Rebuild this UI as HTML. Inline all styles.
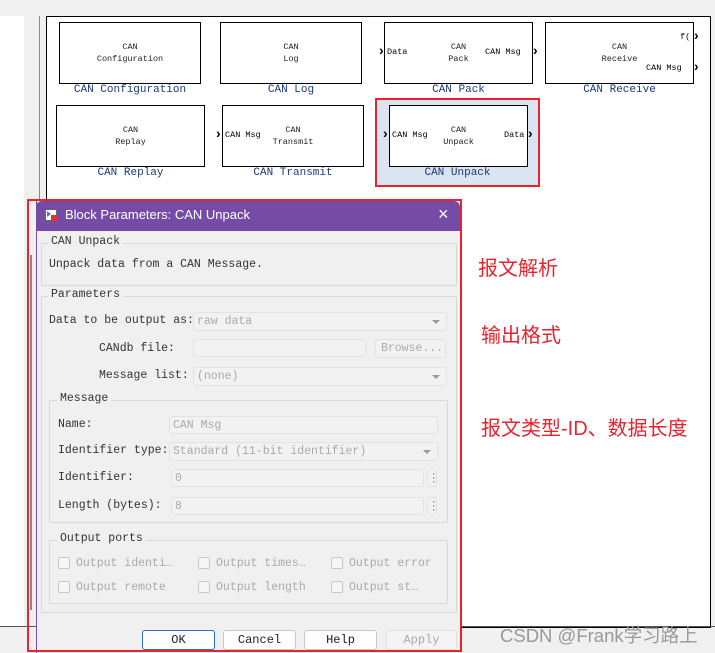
<!DOCTYPE html>
<html><head><meta charset="utf-8"><style>
*{margin:0;padding:0;box-sizing:border-box}
body{width:715px;height:653px;overflow:hidden;background:#f0f0f0;position:relative;font-family:"Liberation Mono","Noto Sans CJK SC",monospace}
.a{position:absolute}
.blk{position:absolute;border:1.5px solid #000;background:#fff;font-size:8.5px;color:#222;text-align:center;line-height:12px}
.lbl{position:absolute;font-size:11px;color:#1a3a7a;text-align:center;white-space:nowrap}
.pt{position:absolute;font-size:8.5px}
.t{position:absolute;font-size:11.5px;color:#333;white-space:nowrap}
.g{color:#aaa}
.fs{position:absolute;border:1px solid #d8d8d8;border-radius:2px}
.lg{position:absolute;background:#f0f0f0;padding:0 3px;font-size:11.5px;color:#333}
.in{position:absolute;border:1px solid #e2e2e2;background:#f2f2f2;border-radius:3px;font-size:11.5px;color:#aaa;padding-left:3px;line-height:17px;white-space:nowrap}
.dd:after{content:"";position:absolute;right:6px;top:7px;border:4px solid transparent;border-top:4px solid #999}
.cb{position:absolute;width:12px;height:12px;border:1px solid #c8c8c8;border-radius:2px;background:#f6f6f6}
.btn{position:absolute;top:630px;height:20px;border:1px solid #c8c8c8;border-radius:3px;background:#fdfdfd;font-size:12px;text-align:center;line-height:19px;color:#222}
.ar{position:absolute;font-size:14px;font-weight:bold;color:#000;font-family:"Liberation Sans",sans-serif}
.red{position:absolute;color:#e8232f;font-family:"Liberation Sans","Noto Sans CJK SC",sans-serif;font-size:20px;white-space:nowrap}
</style></head><body>
<div class="a" style="left:0;top:16px;width:24px;height:611px;background:#fff"></div>
<div class="a" style="left:39px;top:16px;width:1px;height:611px;background:#888"></div>
<div class="a" style="left:46px;top:16px;width:665px;height:612px;background:#fff;border:1px solid #000"></div>
<div class="a" style="left:0;top:626px;width:715px;height:1px;background:#555"></div>

<div class="blk" style="left:59px;top:22px;width:142px;height:62px;padding-top:18px">CAN<br>Configuration</div>
<div class="lbl" style="left:59px;top:84px;width:142px">CAN Configuration</div>
<div class="blk" style="left:220px;top:22px;width:142px;height:62px;padding-top:18px">CAN<br>Log</div>
<div class="lbl" style="left:220px;top:84px;width:142px">CAN Log</div>
<div class="blk" style="left:384px;top:22px;width:149px;height:62px;padding-top:18px">CAN<br>Pack</div>
<div class="pt" style="left:387px;top:47px">Data</div>
<div class="pt" style="left:485px;top:47px">CAN Msg</div>
<div class="ar" style="left:379px;top:42px">›</div><div class="ar" style="left:533px;top:42px">›</div>
<div class="lbl" style="left:384px;top:84px;width:149px">CAN Pack</div>
<div class="blk" style="left:545px;top:22px;width:149px;height:62px;padding-top:18px">CAN<br>Receive</div>
<div class="pt" style="left:680px;top:32px">f(</div>
<div class="pt" style="left:646px;top:63px">CAN Msg</div>
<div class="ar" style="left:694px;top:27px">›</div><div class="ar" style="left:694px;top:58px">›</div>
<div class="lbl" style="left:545px;top:84px;width:149px">CAN Receive</div>

<div class="blk" style="left:56px;top:105px;width:149px;height:62px;padding-top:18px">CAN<br>Replay</div>
<div class="lbl" style="left:56px;top:167px;width:149px">CAN Replay</div>
<div class="blk" style="left:222px;top:105px;width:142px;height:62px;padding-top:18px">CAN<br>Transmit</div>
<div class="pt" style="left:225px;top:130px">CAN Msg</div>
<div class="ar" style="left:216px;top:125px">›</div>
<div class="lbl" style="left:222px;top:167px;width:142px">CAN Transmit</div>

<div class="a" style="left:375px;top:98px;width:165px;height:89px;background:#dae5f1;border:2px solid #e8232f"></div>
<div class="blk" style="left:389px;top:105px;width:139px;height:62px;padding-top:18px">CAN<br>Unpack</div>
<div class="pt" style="left:392px;top:130px">CAN Msg</div>
<div class="pt" style="left:504px;top:130px">Data</div>
<div class="ar" style="left:383px;top:125px">›</div><div class="ar" style="left:528px;top:125px">›</div>
<div class="lbl" style="left:375px;top:167px;width:165px">CAN Unpack</div>

<div class="a" style="left:36px;top:201px;width:424px;height:452px;background:#f0f0f0;border-left:1px solid #7b4ea8"></div>
<div class="a" style="left:30px;top:255px;width:2px;height:355px;background:#888"></div>
<div class="a" style="left:36px;top:201px;width:424px;height:30px;background:#744ca6;border-radius:6px 6px 0 0"></div>
<div class="a" style="left:45px;top:209px;width:12px;height:12px;background:#fff;border:1px solid #666"><div class="a" style="left:5px;top:5px;width:6px;height:6px;background:#d33"></div><div class="a" style="left:1px;top:1px;border:3px solid transparent;border-left:4px solid #38a"></div></div>
<div class="a" style="left:65px;top:207px;font-family:'Liberation Sans',sans-serif;font-size:13px;color:#fff">Block Parameters: CAN Unpack</div>
<div class="a" style="left:438px;top:204px;font-family:'Liberation Sans',sans-serif;font-size:18px;color:#fff">×</div>

<div class="fs" style="left:41px;top:243px;width:416px;height:43px"></div>
<div class="lg" style="left:48px;top:235px">CAN Unpack</div>
<div class="t" style="left:49px;top:258px">Unpack data from a CAN Message.</div>

<div class="fs" style="left:41px;top:296px;width:416px;height:317px"></div>
<div class="lg" style="left:48px;top:288px">Parameters</div>
<div class="t" style="left:49px;top:314px">Data to be output as:</div>
<div class="in dd" style="left:193px;top:312px;width:254px;height:19px">raw data</div>
<div class="t" style="left:99px;top:342px">CANdb file:</div>
<div class="in" style="left:193px;top:339px;width:173px;height:18px"></div>
<div class="in" style="left:375px;top:339px;width:71px;height:19px;text-align:center">Browse...</div>
<div class="t" style="left:99px;top:369px">Message list:</div>
<div class="in dd" style="left:193px;top:367px;width:254px;height:19px">(none)</div>

<div class="fs" style="left:49px;top:400px;width:399px;height:123px"></div>
<div class="lg" style="left:57px;top:392px">Message</div>
<div class="t" style="left:58px;top:418px">Name:</div>
<div class="in" style="left:169px;top:416px;width:269px;height:18px">CAN Msg</div>
<div class="t" style="left:58px;top:444px">Identifier type:</div>
<div class="in dd" style="left:169px;top:442px;width:269px;height:19px">Standard (11-bit identifier)</div>
<div class="t" style="left:58px;top:471px">Identifier:</div>
<div class="in" style="left:171px;top:469px;width:253px;height:18px">0</div>
<div class="in" style="left:427px;top:469px;width:10px;height:18px;color:#888;padding:0;text-align:center">⋮</div>
<div class="t" style="left:58px;top:499px">Length (bytes):</div>
<div class="in" style="left:171px;top:497px;width:253px;height:18px">8</div>
<div class="in" style="left:427px;top:497px;width:10px;height:18px;color:#888;padding:0;text-align:center">⋮</div>

<div class="fs" style="left:49px;top:540px;width:399px;height:64px"></div>
<div class="lg" style="left:57px;top:532px">Output ports</div>
<div class="cb" style="left:58px;top:557px"></div><div class="t g" style="left:76px;top:557px">Output identi…</div>
<div class="cb" style="left:198px;top:557px"></div><div class="t g" style="left:216px;top:557px">Output times…</div>
<div class="cb" style="left:331px;top:557px"></div><div class="t g" style="left:349px;top:557px">Output error</div>
<div class="cb" style="left:58px;top:581px"></div><div class="t g" style="left:76px;top:581px">Output remote</div>
<div class="cb" style="left:198px;top:581px"></div><div class="t g" style="left:216px;top:581px">Output length</div>
<div class="cb" style="left:331px;top:581px"></div><div class="t g" style="left:349px;top:581px">Output st…</div>

<div class="btn" style="left:142px;width:73px;border-color:#2a6fc9">OK</div>
<div class="btn" style="left:223px;width:73px">Cancel</div>
<div class="btn" style="left:304px;width:73px">Help</div>
<div class="btn" style="left:386px;width:71px;color:#aaa;background:#f4f4f4;border-color:#e0e0e0">Apply</div>

<div class="a" style="left:27px;top:199px;width:435px;height:453px;border:2px solid #e8232f"></div>

<div class="red" style="left:478px;top:252px">报文解析</div>
<div class="red" style="left:481px;top:319px">输出格式</div>
<div class="red" style="left:481px;top:412px">报文类型-ID、数据长度</div>
<div class="a" style="left:500px;top:622px;font-family:'Liberation Sans','Noto Sans CJK SC',sans-serif;font-size:18.5px;color:#999;white-space:nowrap">CSDN @Frank学习路上</div>
</body></html>
